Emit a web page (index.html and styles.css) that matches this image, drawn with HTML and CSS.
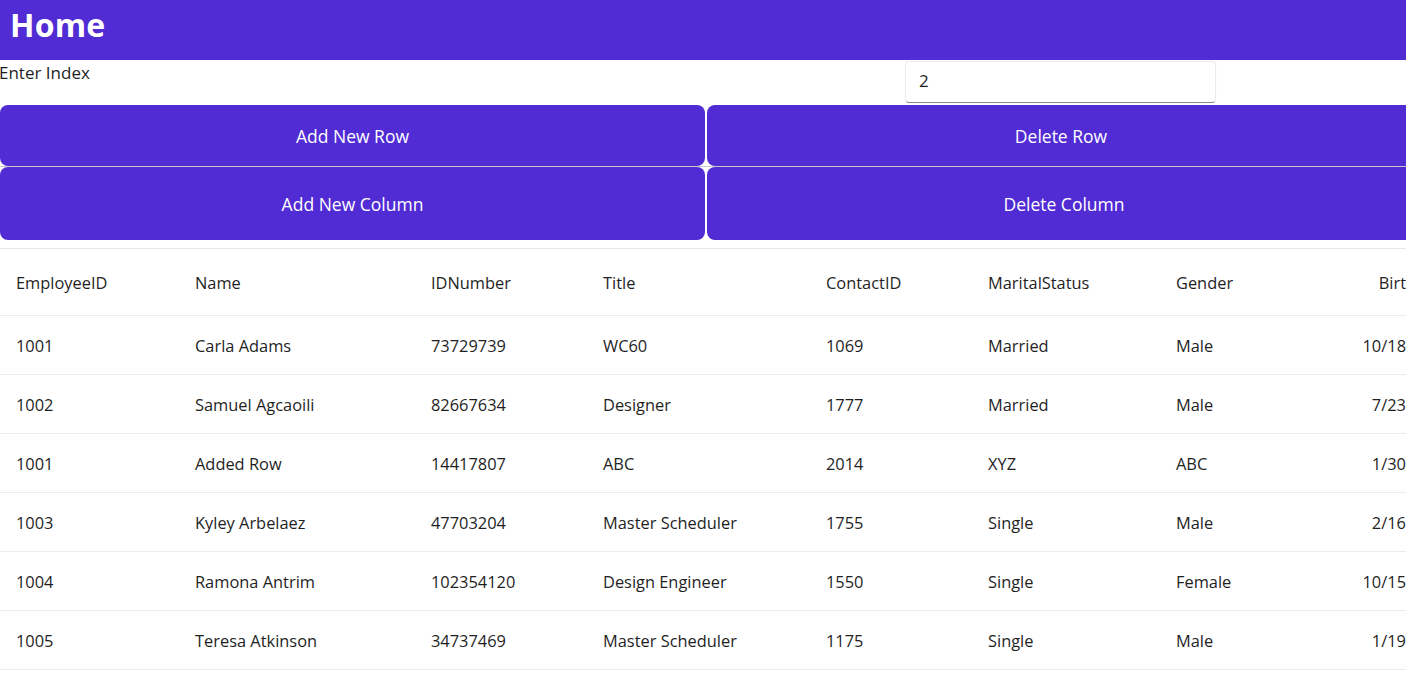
FILE: index.html
```html
<!DOCTYPE html>
<html>
<head>
<meta charset="utf-8">
<link rel="stylesheet" href="styles.css">
</head>
<body>
<header class="topbar"><h1 class="title">Home</h1></header>
<section class="index-row">
  <label class="index-label">Enter Index</label>
  <div class="entry">2</div>
</section>
<section class="buttons">
  <div class="btn-row first">
    <button class="btn left">Add New Row</button>
    <button class="btn right">Delete Row</button>
  </div>
  <div class="btn-row second">
    <button class="btn left">Add New Column</button>
    <button class="btn right wide">Delete Column</button>
  </div>
</section>
<section class="grid">
  <div class="row head">
    <div class="c c1">EmployeeID</div><div class="c c2">Name</div><div class="c c3">IDNumber</div><div class="c c4">Title</div><div class="c c5">ContactID</div><div class="c c6">MaritalStatus</div><div class="c c7">Gender</div><div class="c c8">Birt</div>
  </div>
  <div class="row">
    <div class="c c1">1001</div><div class="c c2">Carla Adams</div><div class="c c3">73729739</div><div class="c c4">WC60</div><div class="c c5">1069</div><div class="c c6">Married</div><div class="c c7">Male</div><div class="c c8">10/18</div>
  </div>
  <div class="row">
    <div class="c c1">1002</div><div class="c c2">Samuel Agcaoili</div><div class="c c3">82667634</div><div class="c c4">Designer</div><div class="c c5">1777</div><div class="c c6">Married</div><div class="c c7">Male</div><div class="c c8">7/23</div>
  </div>
  <div class="row">
    <div class="c c1">1001</div><div class="c c2">Added Row</div><div class="c c3">14417807</div><div class="c c4">ABC</div><div class="c c5">2014</div><div class="c c6">XYZ</div><div class="c c7">ABC</div><div class="c c8">1/30</div>
  </div>
  <div class="row">
    <div class="c c1">1003</div><div class="c c2">Kyley Arbelaez</div><div class="c c3">47703204</div><div class="c c4">Master Scheduler</div><div class="c c5">1755</div><div class="c c6">Single</div><div class="c c7">Male</div><div class="c c8">2/16</div>
  </div>
  <div class="row">
    <div class="c c1">1004</div><div class="c c2">Ramona Antrim</div><div class="c c3">102354120</div><div class="c c4">Design Engineer</div><div class="c c5">1550</div><div class="c c6">Single</div><div class="c c7">Female</div><div class="c c8">10/15</div>
  </div>
  <div class="row">
    <div class="c c1">1005</div><div class="c c2">Teresa Atkinson</div><div class="c c3">34737469</div><div class="c c4">Master Scheduler</div><div class="c c5">1175</div><div class="c c6">Single</div><div class="c c7">Male</div><div class="c c8">1/19</div>
  </div>
</section>
</body>
</html>
```

FILE: styles.css
```css
* { box-sizing: border-box; }
html, body { margin: 0; padding: 0; overflow: hidden; }
body {
  width: 1406px;
  height: 686px;
  background: #ffffff;
  font-family: "Open Sans", "Noto Sans", sans-serif;
  color: #1f1f1f;
}
.topbar {
  height: 60px;
  background: #512bd4;
  display: flex;
  align-items: flex-start;
  padding-left: 10px;
  padding-top: 8px;
}
.title {
  margin: 0;
  color: #ffffff;
  font-size: 32px;
  font-weight: 700;
  line-height: 34px;
  letter-spacing: 0.2px;
}
.index-row {
  height: 45px;
  display: flex;
  align-items: flex-start;
  padding-top: 1px;
}
.index-label {
  font-size: 17px;
  line-height: 23px;
  margin-left: -1px;
  width: 906px;
  color: #1f1f1f;
}
.entry {
  width: 311px;
  height: 42px;
  border: 1px solid #ececec;
  border-bottom: 1px solid #8a8a8a;
  border-radius: 4px;
  background: #ffffff;
  font-size: 17px;
  line-height: 38px;
  padding-left: 13px;
  color: #1f1f1f;
  box-shadow: 0 0 1px rgba(0,0,0,0.08);
}
.buttons { display: flex; flex-direction: column; }
.btn-row { display: flex; gap: 2px; }
.btn-row.first { height: 62px; border-bottom: 1px solid #c8c8c8; }
.btn-row.second { height: 73px; }
.btn {
  border: none;
  background: #512bd4;
  color: #ffffff;
  font-family: "Open Sans", "Noto Sans", sans-serif;
  font-size: 17.5px;
  padding: 0;
  margin: 0;
  flex: none;
}
.btn.left { width: 705px; border-radius: 8px; }
.btn.right { width: 708px; border-radius: 8px; }
.btn.right.wide { width: 714px; }
.grid {
  margin-top: 8px;
  border-top: 1px solid #e6e6e6;
}
.row {
  display: flex;
  height: 59px;
  border-bottom: 1px solid #ececec;
  align-items: center;
}
.row.head { height: 67px; }
.c {
  flex: none;
  font-size: 16.4px;
  white-space: nowrap;
  overflow: hidden;
  padding-left: 20px;
  padding-top: 1px;
  height: 100%;
  display: flex;
  align-items: center;
  border-left: 1px solid #ffffff;
}
.c1 { width: 174px; padding-left: 16px; border-left: none; }
.c2 { width: 236px; }
.c3 { width: 172px; }
.c4 { width: 223px; }
.c5 { width: 162px; }
.c6 { width: 188px; }
.c7 { width: 122px; }
.c8 { width: 129px; padding-left: 0; padding-right: 0; justify-content: flex-end; }
```
